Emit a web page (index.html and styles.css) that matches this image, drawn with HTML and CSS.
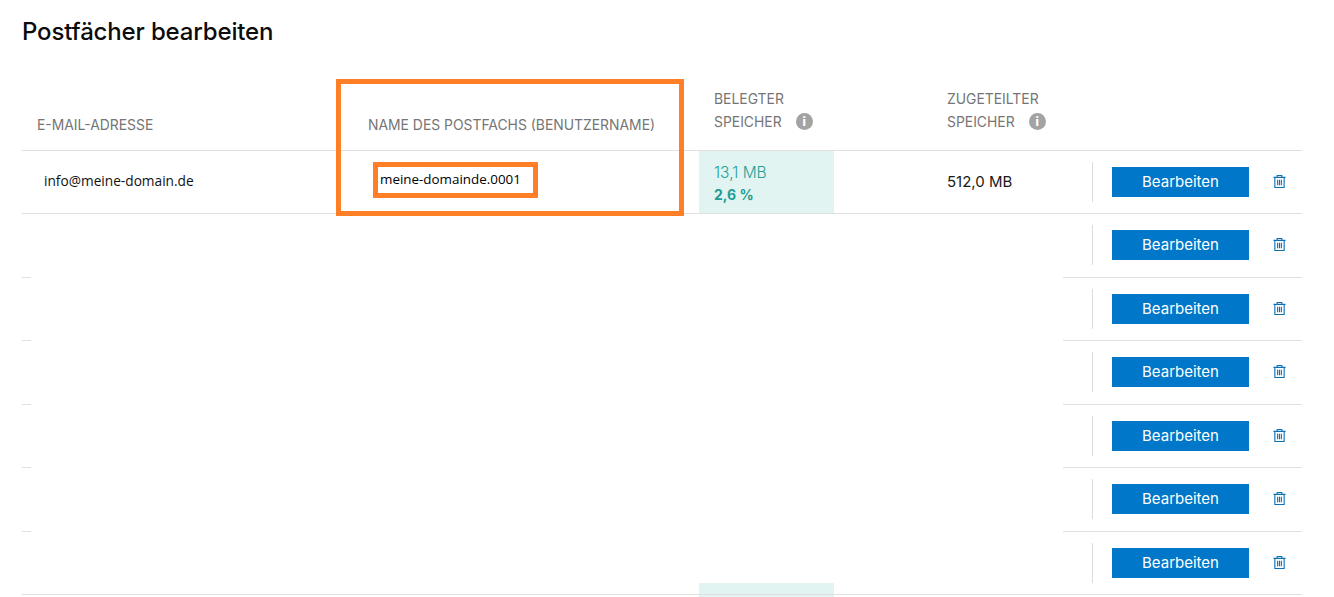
FILE: index.html
```html
<!DOCTYPE html>
<html lang="de">
<head>
<meta charset="utf-8">
<title>Postfächer bearbeiten</title>
<link rel="stylesheet" href="styles.css">
</head>
<body>
<main class="page">
  <h1 class="title">Postfächer bearbeiten</h1>
  <section class="table">
    <div class="head">
      <div class="th th-mail">E-MAIL-ADRESSE</div>
      <div class="th th-name">NAME DES POSTFACHS (BENUTZERNAME)</div>
      <div class="th th-used">BELEGTER<br>SPEICHER<span class="info">i</span></div>
      <div class="th th-alloc">ZUGETEILTER<br>SPEICHER<span class="info">i</span></div>
    </div>

    <div class="row row-full">
      <div class="mail">info@meine-domain.de</div>
      <div class="name">meine-domainde.0001</div>
      <div class="used"><span>13,1 MB</span><b>2,6 %</b></div>
      <div class="alloc">512,0 MB</div>
      <div class="actions">
        <button class="btn">Bearbeiten</button>
        <svg class="trash" viewBox="0 0 14 14"><path d="M4.500 2.500V.5h5v2M.5 2.500h13M2 2.500v11h10v-11M5 5v6M7 5v6M9 5v6"/></svg>
      </div>
    </div>

    <div class="row row-cut">
      <div class="stub"></div>
      <div class="actions">
        <button class="btn">Bearbeiten</button>
        <svg class="trash" viewBox="0 0 14 14"><path d="M4.500 2.500V.5h5v2M.5 2.500h13M2 2.500v11h10v-11M5 5v6M7 5v6M9 5v6"/></svg>
      </div>
    </div>
    <div class="row row-cut">
      <div class="stub"></div>
      <div class="actions">
        <button class="btn">Bearbeiten</button>
        <svg class="trash" viewBox="0 0 14 14"><path d="M4.500 2.500V.5h5v2M.5 2.500h13M2 2.500v11h10v-11M5 5v6M7 5v6M9 5v6"/></svg>
      </div>
    </div>
    <div class="row row-cut">
      <div class="stub"></div>
      <div class="actions">
        <button class="btn">Bearbeiten</button>
        <svg class="trash" viewBox="0 0 14 14"><path d="M4.500 2.500V.5h5v2M.5 2.500h13M2 2.500v11h10v-11M5 5v6M7 5v6M9 5v6"/></svg>
      </div>
    </div>
    <div class="row row-cut">
      <div class="stub"></div>
      <div class="actions">
        <button class="btn">Bearbeiten</button>
        <svg class="trash" viewBox="0 0 14 14"><path d="M4.500 2.500V.5h5v2M.5 2.500h13M2 2.500v11h10v-11M5 5v6M7 5v6M9 5v6"/></svg>
      </div>
    </div>
    <div class="row row-cut">
      <div class="stub"></div>
      <div class="actions">
        <button class="btn">Bearbeiten</button>
        <svg class="trash" viewBox="0 0 14 14"><path d="M4.500 2.500V.5h5v2M.5 2.500h13M2 2.500v11h10v-11M5 5v6M7 5v6M9 5v6"/></svg>
      </div>
    </div>
    <div class="row row-full row-last">
      <div class="teal-strip"></div>
      <div class="actions">
        <button class="btn">Bearbeiten</button>
        <svg class="trash" viewBox="0 0 14 14"><path d="M4.500 2.500V.5h5v2M.5 2.500h13M2 2.500v11h10v-11M5 5v6M7 5v6M9 5v6"/></svg>
      </div>
    </div>
  </section>
  <div class="mark mark-col"></div>
  <div class="mark mark-cell"></div>
</main>
</body>
</html>
```

FILE: styles.css
```css
* { box-sizing: border-box; }
html { margin: 0; padding: 0; background: #fff; height: 597px; overflow: hidden; }
body { margin: 0; padding: 0; height: 597px; font-family: Inter, "Liberation Sans", sans-serif; color: #111; }
.page { position: relative; height: 597px; padding: 0 32px 0 22px; overflow: hidden; }
.title { margin: 0; padding-top: 17px; height: 70px; font-size: 24px; line-height: 30px; font-weight: 500; color: #0c0c0c; letter-spacing: -0.15px; }
.table { display: flex; flex-direction: column; width: 1280px; }
.head { display: flex; height: 80.500px; border-bottom: 1px solid #e0e0e0; font-size: 13.900px; line-height: 23px; color: #757575; font-weight: 400; }
.th { padding-top: 18px; }
.th-mail { width: 346px; padding: 44px 0 0 15px; }
.th-name { width: 346px; padding-top: 44px; }
.th-used { width: 233px; }
.th-alloc { width: 200px; }
.info { display: inline-flex; align-items: center; justify-content: center; width: 17px; height: 17px; margin-left: 14px; border-radius: 50%; background: #a3a3a3; color: #fff; font-size: 12px; line-height: 17px; font-weight: 800; vertical-align: 1px; }
.row { display: flex; height: 63.500px; }
.row-full { border-bottom: 1px solid #e0e0e0; }
.mail { width: 358px; padding: 0 0 0 22px; align-self: center; font-family: "Open Sans", sans-serif; font-size: 13.700px; color: #111; margin-top: -3px; }
.name { width: 319px; align-self: center; font-family: "Open Sans", sans-serif; font-size: 13.400px; color: #000; margin-top: -5px; }
.used { width: 135px; background: #e1f4f1; padding: 11px 0 0 15px; color: #1f9f96; font-size: 15.500px; line-height: 22px; font-weight: 300; display: flex; flex-direction: column; }
.used b { font-weight: 700; font-size: 14px; color: #1f9d94; }
.alloc { width: 113px; margin-left: 113px; align-self: center; font-size: 15px; font-weight: 400; color: #1a1a1a; white-space: nowrap; margin-top: -1px; }
.actions { margin-left: auto; width: 210px; display: flex; align-items: center; height: 40px; margin-top: 11px; border-left: 1px solid #dcdcdc; padding-left: 19px; }
.btn { width: 137px; height: 30px; border: 0; padding: 0 0 1px; border-radius: 0; background: #0077c8; color: #fff; font-family: Inter, sans-serif; font-size: 15px; font-weight: 400; }
.trash { width: 13px; height: 13px; margin-left: 24px; margin-top: -1px; fill: none; stroke: #0b72b8; stroke-width: 1.200; }
.row-cut { justify-content: space-between; position: relative; }
.stub { width: 9px; height: 100%; border-bottom: 1px solid #e0e0e0; }
.row-cut::after { content: ""; position: absolute; right: 0; bottom: 0; width: 239px; border-bottom: 1px solid #e0e0e0; }
.row-last { position: relative; }
.teal-strip { position: absolute; z-index: -1; left: 677px; bottom: -4px; width: 135px; height: 15px; background: #e1f4f1; }
.mark { position: absolute; border: 5px solid #ff7f27; }
.mark-col { left: 336px; top: 79px; width: 348px; height: 137px; }
.mark-cell { left: 373px; top: 162px; width: 165px; height: 36px; }
```
